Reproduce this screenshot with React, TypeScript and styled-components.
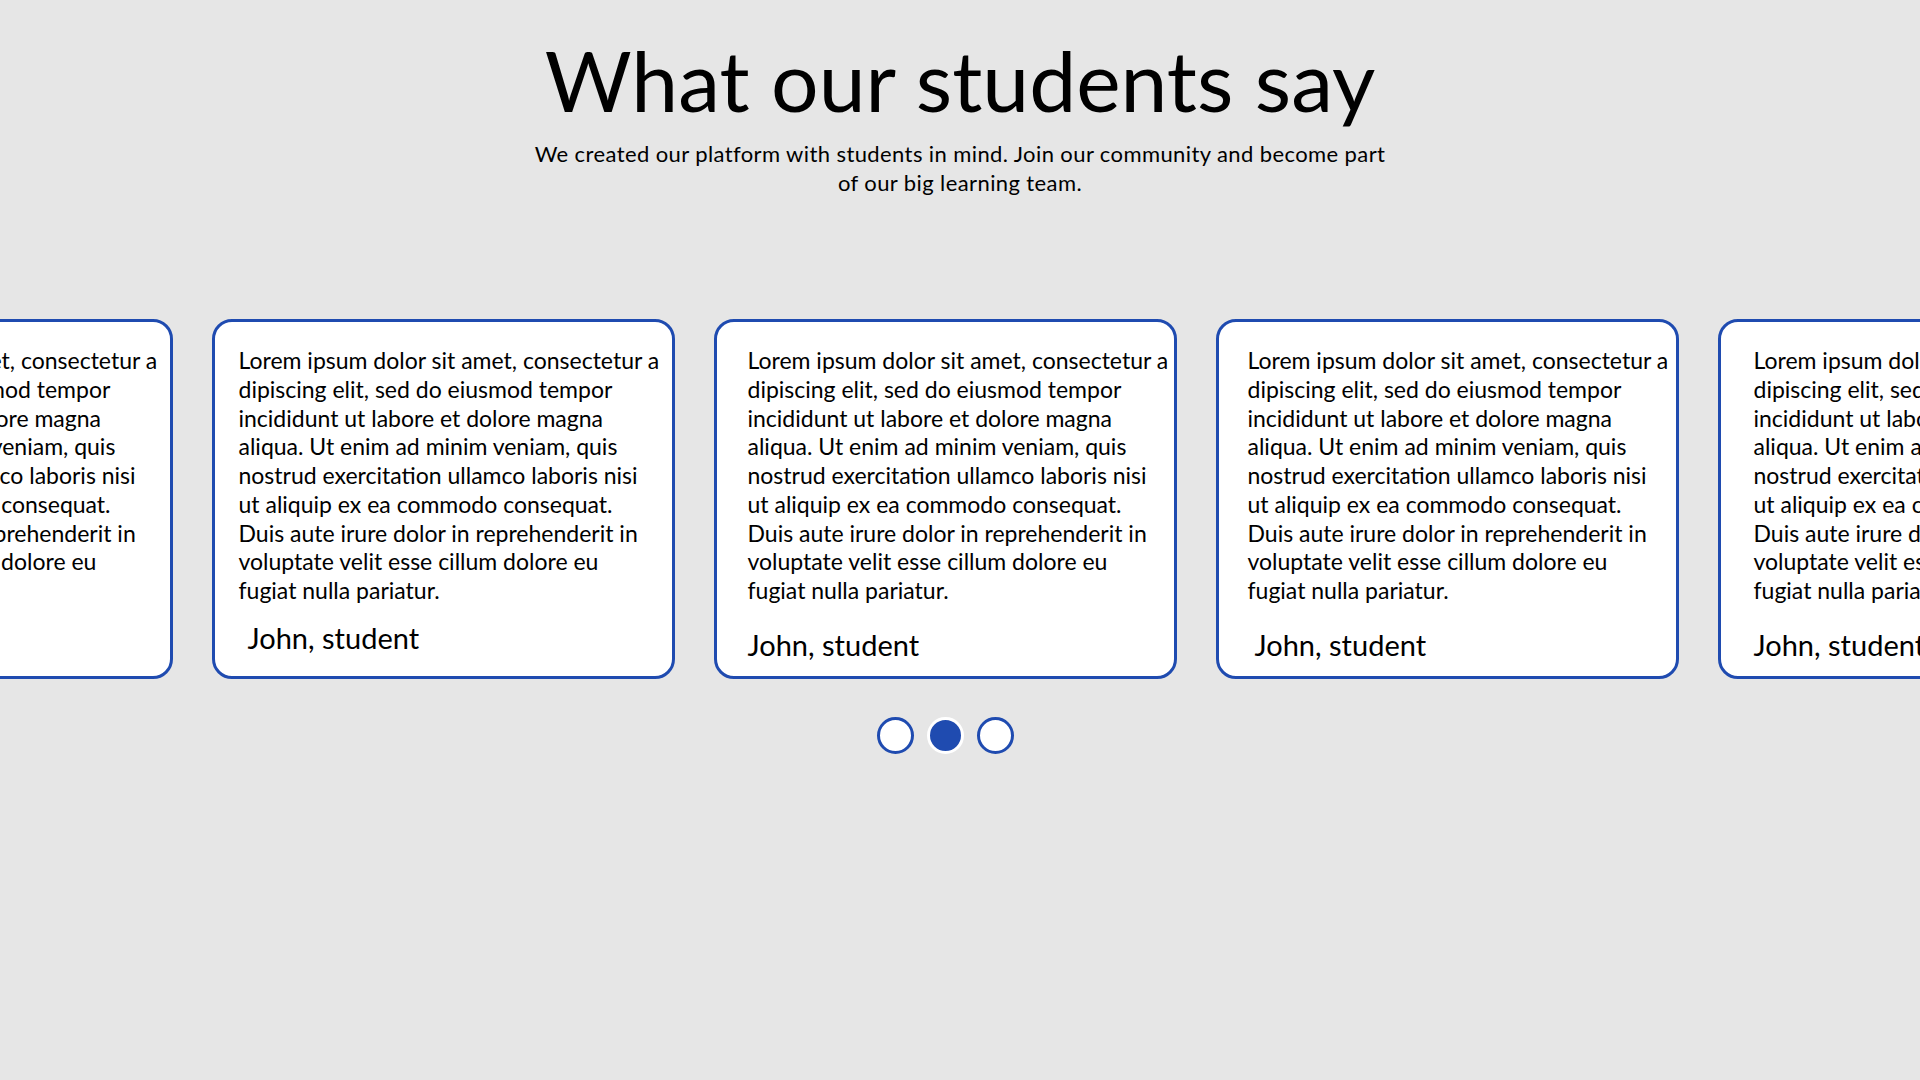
import styled, { createGlobalStyle } from "styled-components";

const GlobalStyle = createGlobalStyle`
  html, body {
    margin: 0;
    padding: 0;
    background: #e6e6e6;
  }
  body {
    font-family: Lato, "Open Sans", sans-serif;
    color: #000;
  }
`;

const QUOTE = `Lorem ipsum dolor sit amet, consectetur a
dipiscing elit, sed do eiusmod tempor
incididunt ut labore et dolore magna
aliqua. Ut enim ad minim veniam, quis
nostrud exercitation ullamco laboris nisi
ut aliquip ex ea commodo consequat.
Duis aute irure dolor in reprehenderit in
voluptate velit esse cillum dolore eu
fugiat nulla pariatur.`;

type Testimonial = {
  id: number;
  inset: number;
  nameInset: number;
  nameLift: number;
};

const testimonials: Testimonial[] = [
  { id: 1, inset: 24, nameInset: 33, nameLift: 0 },
  { id: 2, inset: 24, nameInset: 33, nameLift: 7 },
  { id: 3, inset: 31, nameInset: 31, nameLift: 0 },
  { id: 4, inset: 29, nameInset: 36, nameLift: 0 },
  { id: 5, inset: 33, nameInset: 33, nameLift: 0 },
];

const App = () => {
  const active = 1;

  return (
    <>
      <GlobalStyle />
      <Page>
        <Header>
          <Title>What our students say</Title>
          <Subtitle>
            We created our platform with students in mind. Join our community and become part
            <br />
            of our big learning team.
          </Subtitle>
        </Header>
        <Carousel>
          <Track>
            {testimonials.map((t) => (
              <Card key={t.id}>
                <Quote $inset={t.inset}>{QUOTE}</Quote>
                <Author $inset={t.nameInset} $lift={t.nameLift}>
                  John, student
                </Author>
              </Card>
            ))}
          </Track>
          <Dots>
            {[0, 1, 2].map((i) => (
              <Dot key={i} $active={i === active} aria-label={`Slide ${i + 1}`} />
            ))}
          </Dots>
        </Carousel>
      </Page>
    </>
  );
};

const Page = styled.main`
  min-height: 100vh;
  overflow: hidden;
  background: #e6e6e6;
`;

const Header = styled.header`
  display: flex;
  flex-direction: column;
  align-items: center;
  padding-top: 30px;
  text-align: center;
`;

const Title = styled.h1`
  margin: 0;
  font-size: 84px;
  font-weight: 400;
  line-height: 100px;
  letter-spacing: 0;
`;

const Subtitle = styled.p`
  margin: 9px 0 0;
  font-size: 22px;
  line-height: 29px;
  letter-spacing: 0.4px;
`;

const Carousel = styled.section`
  margin-top: 122px;
  padding-right: 30px;
  display: flex;
  flex-direction: column;
  align-items: center;
`;

const Track = styled.div`
  display: flex;
  justify-content: center;
  gap: 39px;
  width: 100%;
`;

const Card = styled.article`
  flex: 0 0 463px;
  width: 463px;
  min-width: 0;
  height: 360px;
  box-sizing: border-box;
  display: flex;
  flex-direction: column;
  padding: 24px 0 0;
  overflow: hidden;
  background: #fff;
  border: 3px solid #1f4bb0;
  border-radius: 20px;
`;

const Quote = styled.p<{ $inset: number }>`
  margin: 0;
  padding-left: ${(p) => p.$inset}px;
  font-size: 23px;
  line-height: 28.75px;
  white-space: pre;
`;

const Author = styled.div<{ $inset: number; $lift: number }>`
  margin-top: ${(p) => 22 - p.$lift}px;
  padding-left: ${(p) => p.$inset}px;
  font-size: 29px;
  line-height: 35px;
`;

const Dots = styled.div`
  display: flex;
  gap: 13px;
  margin-top: 38px;
`;

const Dot = styled.button<{ $active: boolean }>`
  width: 37px;
  height: 37px;
  padding: 0;
  box-sizing: border-box;
  border-radius: 50%;
  cursor: pointer;
  border: 3px solid ${(p) => (p.$active ? "#fff" : "#1f4bb0")};
  background: ${(p) => (p.$active ? "#1f4bb0" : "#fff")};
`;

export default App;
